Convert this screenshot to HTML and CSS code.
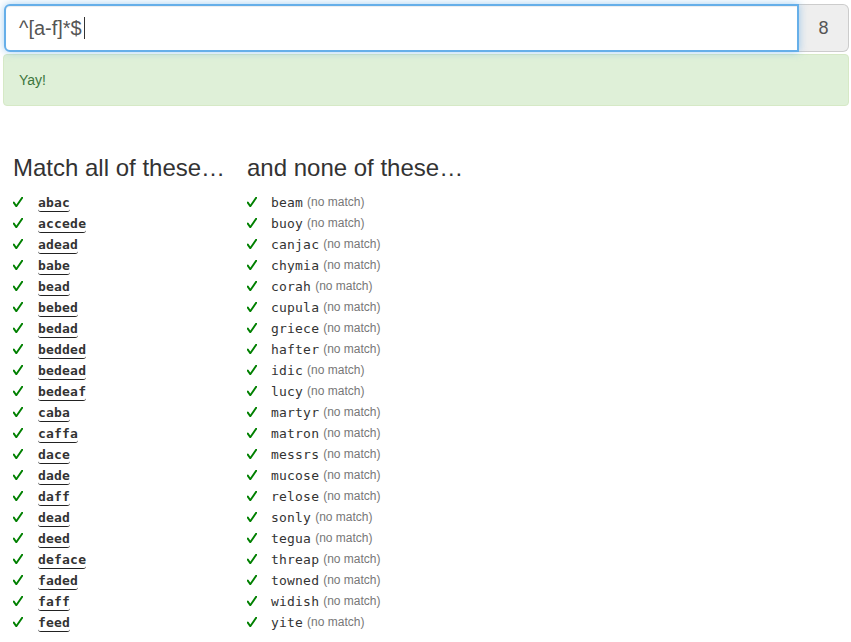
FILE: index.html
```html
<!DOCTYPE html>
<html>
<head>
<meta charset="utf-8">
<link rel="stylesheet" href="styles.css">
</head>
<body>
<div class="page">
  <div class="input-group">
    <div class="regex-input">^[a-f]*$<span class="caret"></span></div>
    <div class="addon">8</div>
  </div>
  <div class="alert">Yay!</div>
  <div class="columns">
    <section class="col col-match">
      <h3>Match all of these…</h3>
      <ul class="words">
        <li><svg class="check" viewBox="0 0 10 10"><path d="M0.8 5.6 L3.3 9.3 L9.4 0.4"/></svg><span class="hit">abac</span></li>
        <li><svg class="check" viewBox="0 0 10 10"><path d="M0.8 5.6 L3.3 9.3 L9.4 0.4"/></svg><span class="hit">accede</span></li>
        <li><svg class="check" viewBox="0 0 10 10"><path d="M0.8 5.6 L3.3 9.3 L9.4 0.4"/></svg><span class="hit">adead</span></li>
        <li><svg class="check" viewBox="0 0 10 10"><path d="M0.8 5.6 L3.3 9.3 L9.4 0.4"/></svg><span class="hit">babe</span></li>
        <li><svg class="check" viewBox="0 0 10 10"><path d="M0.8 5.6 L3.3 9.3 L9.4 0.4"/></svg><span class="hit">bead</span></li>
        <li><svg class="check" viewBox="0 0 10 10"><path d="M0.8 5.6 L3.3 9.3 L9.4 0.4"/></svg><span class="hit">bebed</span></li>
        <li><svg class="check" viewBox="0 0 10 10"><path d="M0.8 5.6 L3.3 9.3 L9.4 0.4"/></svg><span class="hit">bedad</span></li>
        <li><svg class="check" viewBox="0 0 10 10"><path d="M0.8 5.6 L3.3 9.3 L9.4 0.4"/></svg><span class="hit">bedded</span></li>
        <li><svg class="check" viewBox="0 0 10 10"><path d="M0.8 5.6 L3.3 9.3 L9.4 0.4"/></svg><span class="hit">bedead</span></li>
        <li><svg class="check" viewBox="0 0 10 10"><path d="M0.8 5.6 L3.3 9.3 L9.4 0.4"/></svg><span class="hit">bedeaf</span></li>
        <li><svg class="check" viewBox="0 0 10 10"><path d="M0.8 5.6 L3.3 9.3 L9.4 0.4"/></svg><span class="hit">caba</span></li>
        <li><svg class="check" viewBox="0 0 10 10"><path d="M0.8 5.6 L3.3 9.3 L9.4 0.4"/></svg><span class="hit">caffa</span></li>
        <li><svg class="check" viewBox="0 0 10 10"><path d="M0.8 5.6 L3.3 9.3 L9.4 0.4"/></svg><span class="hit">dace</span></li>
        <li><svg class="check" viewBox="0 0 10 10"><path d="M0.8 5.6 L3.3 9.3 L9.4 0.4"/></svg><span class="hit">dade</span></li>
        <li><svg class="check" viewBox="0 0 10 10"><path d="M0.8 5.6 L3.3 9.3 L9.4 0.4"/></svg><span class="hit">daff</span></li>
        <li><svg class="check" viewBox="0 0 10 10"><path d="M0.8 5.6 L3.3 9.3 L9.4 0.4"/></svg><span class="hit">dead</span></li>
        <li><svg class="check" viewBox="0 0 10 10"><path d="M0.8 5.6 L3.3 9.3 L9.4 0.4"/></svg><span class="hit">deed</span></li>
        <li><svg class="check" viewBox="0 0 10 10"><path d="M0.8 5.6 L3.3 9.3 L9.4 0.4"/></svg><span class="hit">deface</span></li>
        <li><svg class="check" viewBox="0 0 10 10"><path d="M0.8 5.6 L3.3 9.3 L9.4 0.4"/></svg><span class="hit">faded</span></li>
        <li><svg class="check" viewBox="0 0 10 10"><path d="M0.8 5.6 L3.3 9.3 L9.4 0.4"/></svg><span class="hit">faff</span></li>
        <li><svg class="check" viewBox="0 0 10 10"><path d="M0.8 5.6 L3.3 9.3 L9.4 0.4"/></svg><span class="hit">feed</span></li>
      </ul>
    </section>
    <section class="col col-none">
      <h3>and none of these…</h3>
      <ul class="words">
        <li><svg class="check" viewBox="0 0 10 10"><path d="M0.8 5.6 L3.3 9.3 L9.4 0.4"/></svg><span class="miss">beam</span> <span class="note">(no match)</span></li>
        <li><svg class="check" viewBox="0 0 10 10"><path d="M0.8 5.6 L3.3 9.3 L9.4 0.4"/></svg><span class="miss">buoy</span> <span class="note">(no match)</span></li>
        <li><svg class="check" viewBox="0 0 10 10"><path d="M0.8 5.6 L3.3 9.3 L9.4 0.4"/></svg><span class="miss">canjac</span> <span class="note">(no match)</span></li>
        <li><svg class="check" viewBox="0 0 10 10"><path d="M0.8 5.6 L3.3 9.3 L9.4 0.4"/></svg><span class="miss">chymia</span> <span class="note">(no match)</span></li>
        <li><svg class="check" viewBox="0 0 10 10"><path d="M0.8 5.6 L3.3 9.3 L9.4 0.4"/></svg><span class="miss">corah</span> <span class="note">(no match)</span></li>
        <li><svg class="check" viewBox="0 0 10 10"><path d="M0.8 5.6 L3.3 9.3 L9.4 0.4"/></svg><span class="miss">cupula</span> <span class="note">(no match)</span></li>
        <li><svg class="check" viewBox="0 0 10 10"><path d="M0.8 5.6 L3.3 9.3 L9.4 0.4"/></svg><span class="miss">griece</span> <span class="note">(no match)</span></li>
        <li><svg class="check" viewBox="0 0 10 10"><path d="M0.8 5.6 L3.3 9.3 L9.4 0.4"/></svg><span class="miss">hafter</span> <span class="note">(no match)</span></li>
        <li><svg class="check" viewBox="0 0 10 10"><path d="M0.8 5.6 L3.3 9.3 L9.4 0.4"/></svg><span class="miss">idic</span> <span class="note">(no match)</span></li>
        <li><svg class="check" viewBox="0 0 10 10"><path d="M0.8 5.6 L3.3 9.3 L9.4 0.4"/></svg><span class="miss">lucy</span> <span class="note">(no match)</span></li>
        <li><svg class="check" viewBox="0 0 10 10"><path d="M0.8 5.6 L3.3 9.3 L9.4 0.4"/></svg><span class="miss">martyr</span> <span class="note">(no match)</span></li>
        <li><svg class="check" viewBox="0 0 10 10"><path d="M0.8 5.6 L3.3 9.3 L9.4 0.4"/></svg><span class="miss">matron</span> <span class="note">(no match)</span></li>
        <li><svg class="check" viewBox="0 0 10 10"><path d="M0.8 5.6 L3.3 9.3 L9.4 0.4"/></svg><span class="miss">messrs</span> <span class="note">(no match)</span></li>
        <li><svg class="check" viewBox="0 0 10 10"><path d="M0.8 5.6 L3.3 9.3 L9.4 0.4"/></svg><span class="miss">mucose</span> <span class="note">(no match)</span></li>
        <li><svg class="check" viewBox="0 0 10 10"><path d="M0.8 5.6 L3.3 9.3 L9.4 0.4"/></svg><span class="miss">relose</span> <span class="note">(no match)</span></li>
        <li><svg class="check" viewBox="0 0 10 10"><path d="M0.8 5.6 L3.3 9.3 L9.4 0.4"/></svg><span class="miss">sonly</span> <span class="note">(no match)</span></li>
        <li><svg class="check" viewBox="0 0 10 10"><path d="M0.8 5.6 L3.3 9.3 L9.4 0.4"/></svg><span class="miss">tegua</span> <span class="note">(no match)</span></li>
        <li><svg class="check" viewBox="0 0 10 10"><path d="M0.8 5.6 L3.3 9.3 L9.4 0.4"/></svg><span class="miss">threap</span> <span class="note">(no match)</span></li>
        <li><svg class="check" viewBox="0 0 10 10"><path d="M0.8 5.6 L3.3 9.3 L9.4 0.4"/></svg><span class="miss">towned</span> <span class="note">(no match)</span></li>
        <li><svg class="check" viewBox="0 0 10 10"><path d="M0.8 5.6 L3.3 9.3 L9.4 0.4"/></svg><span class="miss">widish</span> <span class="note">(no match)</span></li>
        <li><svg class="check" viewBox="0 0 10 10"><path d="M0.8 5.6 L3.3 9.3 L9.4 0.4"/></svg><span class="miss">yite</span> <span class="note">(no match)</span></li>
      </ul>
    </section>
  </div>
</div>
</body>
</html>
```

FILE: styles.css
```css
html, body {
  margin: 0;
  padding: 0;
  background: #fff;
}
body {
  font-family: "Liberation Sans", Arial, sans-serif;
  font-size: 14px;
  color: #333;
}
.page {
  width: 846px;
  padding: 4px 0 0 3px;
}
.input-group {
  display: flex;
  height: 48px;
  margin-left: 1px;
}
.regex-input {
  flex: 1;
  box-sizing: border-box;
  height: 48px;
  border: 2px solid #66afe9;
  border-radius: 6px 0 0 6px;
  box-shadow: inset 0 1px 1px rgba(0,0,0,.075), 0 0 8px rgba(102,175,233,.6);
  padding: 0 0 0 13px;
  font-size: 20px;
  line-height: 44px;
  color: #555;
  display: flex;
  align-items: center;
  position: relative;
  z-index: 2;
  background: #fff;
}
.caret {
  display: inline-block;
  width: 1px;
  height: 22px;
  background: #333;
  margin-left: 2px;
}
.addon {
  box-sizing: border-box;
  width: 50px;
  height: 48px;
  background: #eee;
  border: 1px solid #ccc;
  border-left: 0;
  border-radius: 0 6px 6px 0;
  font-size: 18px;
  color: #555;
  display: flex;
  align-items: center;
  justify-content: center;
}
.alert {
  margin-top: 2px;
  box-sizing: border-box;
  height: 52px;
  padding: 15px;
  line-height: 20px;
  background: #dff0d8;
  border: 1px solid #d6e9c6;
  border-radius: 4px;
  color: #3c763d;
  font-size: 14px;
}
.columns {
  display: flex;
  margin-top: 48px;
  padding-left: 10px;
}
.col-match {
  width: 234px;
}
.col-none {
  flex: 1;
}
h3 {
  margin: 0 0 10px 0;
  font-size: 24px;
  font-weight: 400;
  line-height: 28px;
  color: #333;
}
.words {
  list-style: none;
  margin: 0;
  padding: 0;
}
.words li {
  height: 21px;
  line-height: 21px;
  display: flex;
  align-items: center;
  white-space: nowrap;
}
.check {
  width: 10px;
  height: 10px;
  margin-right: 15px;
  margin-top: -2px;
  flex: none;
}
.check path {
  fill: none;
  stroke: #008000;
  stroke-width: 1.9;
  stroke-linecap: round;
  stroke-linejoin: round;
}
.col-none .check {
  margin-right: 14px;
}
.hit, .miss {
  font-family: "DejaVu Sans Mono", "Liberation Mono", monospace;
  font-size: 13px;
  letter-spacing: 0.2px;
}
.hit {
  font-weight: bold;
  color: #333;
  line-height: 15px;
  padding-bottom: 1px;
  border-bottom: 1px solid #222;
  border-radius: 3px;
  margin-top: 2px;
}
.miss {
  color: #333;
}
.note {
  font-size: 12px;
  color: #777;
  margin-left: 4px;
}
```
